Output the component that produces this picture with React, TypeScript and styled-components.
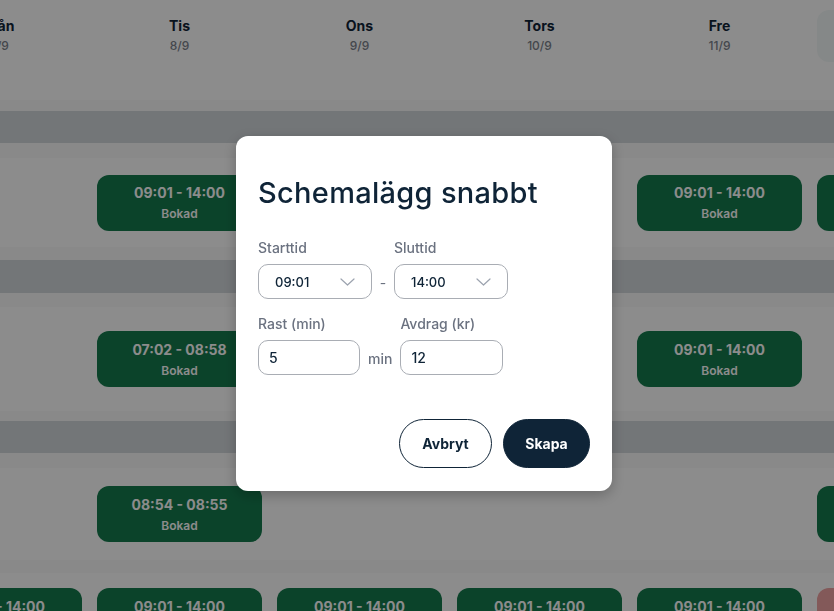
import styled, { createGlobalStyle } from "styled-components";

const navy = "#0f2437";

const GlobalStyle = createGlobalStyle`
  html, body {
    margin: 0;
    padding: 0;
    overflow: hidden;
    background: #ffffff;
    font-family: Inter, "Noto Sans", "DejaVu Sans", sans-serif;
  }
`;

/*******************/
/*    Schedule     */
/*******************/

const Page = styled.div`
  width: 834px;
  height: 611px;
  overflow: hidden;
  background: #ffffff;
`;

// the week grid is scrolled a bit to the right, so Mån is cut off
const Week = styled.div`
  display: flex;
  flex-direction: column;
  width: 1065px;
  margin-left: -83px;
`;

const Columns = styled.div<{ $height: number }>`
  display: grid;
  grid-template-columns: repeat(6, 165px);
  column-gap: 15px;
  align-items: center;
  height: ${(p) => p.$height}px;
  background: #ffffff;
`;

const HeadRow = styled(Columns)`
  align-items: start;
  padding-top: 10px;
  box-sizing: border-box;
`;

const DayHead = styled.div<{ $today?: boolean }>`
  height: 52px;
  border-radius: 12px;
  background: ${(p) => (p.$today ? "#f3f8f8" : "transparent")};
  display: flex;
  flex-direction: column;
  align-items: center;
  justify-content: center;
  gap: 3px;
  padding-bottom: 2px;
  box-sizing: border-box;

  .name {
    font-size: 14px;
    line-height: 18px;
    font-weight: 700;
    color: ${navy};
  }

  .date {
    font-size: 12px;
    line-height: 16px;
    font-weight: 500;
    color: #7c828c;
  }
`;

const Strip = styled.div<{ $height: number }>`
  height: ${(p) => p.$height}px;
  background: #f9f9f9;
`;

const Band = styled.div<{ $height: number }>`
  height: ${(p) => p.$height}px;
  background: #d2d7db;
`;

const Shift = styled.div<{ $tone?: "booked" | "warn" }>`
  height: 56px;
  border-radius: 12px;
  background: ${(p) => (p.$tone === "warn" ? "#eea2a2" : "#157b4e")};
  color: #ffffff;
  display: flex;
  flex-direction: column;
  align-items: center;
  justify-content: center;
  gap: 4px;

  .time {
    font-size: 14px;
    line-height: 18px;
    font-weight: 700;
  }

  .status {
    font-size: 12px;
    line-height: 15px;
    font-weight: 600;
  }
`;

/*******************/
/*      Modal      */
/*******************/

const Overlay = styled.div`
  position: fixed;
  inset: 0;
  background: rgba(0, 0, 0, 0.45);
  display: flex;
  align-items: center;
  justify-content: center;
  padding: 16px 0 0 14px;
`;

const Dialog = styled.div`
  width: 376px;
  box-sizing: border-box;
  padding: 40px 22px 23px;
  background: #ffffff;
  border-radius: 12px;
  box-shadow: 0 4px 14px rgba(0, 0, 0, 0.25);
  display: flex;
  flex-direction: column;
`;

const Title = styled.h2`
  margin: 0 0 28px;
  font-size: 29px;
  line-height: 34px;
  font-weight: 500;
  letter-spacing: 0.3px;
  color: ${navy};
`;

const FieldRow = styled.div<{ $gap: number }>`
  display: flex;
  align-items: flex-end;
  gap: ${(p) => p.$gap}px;
  margin-bottom: 15px;
`;

const Field = styled.label<{ $width: number }>`
  width: ${(p) => p.$width}px;
  display: flex;
  flex-direction: column;
  gap: 6px;
`;

const Label = styled.span`
  font-size: 14px;
  line-height: 20px;
  font-weight: 500;
  color: #6b7280;
`;

const Select = styled.div`
  height: 35px;
  box-sizing: border-box;
  border: 1px solid #a9adb4;
  border-radius: 10px;
  padding: 0 16px 0 16px;
  display: flex;
  align-items: center;
  justify-content: space-between;
  font-size: 13px;
  font-weight: 500;
  color: ${navy};
`;

const Input = styled.input`
  height: 35px;
  box-sizing: border-box;
  border: 1px solid #a9adb4;
  border-radius: 10px;
  padding: 0 10px;
  font-family: inherit;
  font-size: 14px;
  font-weight: 500;
  color: ${navy};
  outline: none;
`;

const Dash = styled.span`
  width: 22px;
  height: 35px;
  line-height: 38px;
  text-align: center;
  font-size: 14px;
  color: #6b7280;
`;

const Unit = styled.span`
  height: 35px;
  line-height: 37px;
  font-size: 14px;
  font-weight: 500;
  color: #6b7280;
`;

const Actions = styled.div`
  display: flex;
  justify-content: flex-end;
  gap: 11px;
  margin-top: 29px;
`;

const Button = styled.button<{ $primary?: boolean; $width: number }>`
  width: ${(p) => p.$width}px;
  height: 49px;
  border-radius: 999px;
  border: 1px solid ${navy};
  background: ${(p) => (p.$primary ? navy : "#ffffff")};
  color: ${(p) => (p.$primary ? "#ffffff" : navy)};
  font-family: inherit;
  font-size: 14px;
  font-weight: 700;
  cursor: pointer;
`;

const Chevron = () => (
  <svg width="15" height="8" viewBox="0 0 15 8" fill="none">
    <path d="M1 1l6.5 6L14 1" stroke="#9ca3af" strokeWidth="1.2" strokeLinecap="round" strokeLinejoin="round" />
  </svg>
);

const days = [
  { name: "Mån", date: "7/9" },
  { name: "Tis", date: "8/9" },
  { name: "Ons", date: "9/9" },
  { name: "Tors", date: "10/9" },
  { name: "Fre", date: "11/9" },
  { name: "Lör", date: "12/9", today: true },
];

type Cell = { time: string; tone?: "booked" | "warn" } | null;

const full = { time: "09:01 - 14:00" };

const rows: { height: number; cells: Cell[] }[] = [
  { height: 89, cells: [null, full, null, null, full, full] },
  { height: 104, cells: [null, { time: "07:02 - 08:58" }, null, null, full, null] },
  { height: 92, cells: [null, { time: "08:54 - 08:55" }, null, null, null, full] },
  { height: 86, cells: [full, full, full, full, full, { time: "09:01 - 14:00", tone: "warn" }] },
];

const ShiftRow = ({ height, cells }: { height: number; cells: Cell[] }) => (
  <Columns $height={height}>
    {cells.map((c, i) =>
      c ? (
        <Shift key={i} $tone={c.tone}>
          <span className="time">{c.time}</span>
          <span className="status">Bokad</span>
        </Shift>
      ) : (
        <div key={i} />
      )
    )}
  </Columns>
);

const App = () => {
  return (
    <Page>
      <GlobalStyle />
      <Week>
        {/* Day headers */}
        <HeadRow $height={100}>
          {days.map((d) => (
            <DayHead key={d.name} $today={d.today}>
              <span className="name">{d.name}</span>
              <span className="date">{d.date}</span>
            </DayHead>
          ))}
        </HeadRow>
        <Strip $height={11} />

        {/* Group 1 */}
        <Band $height={32} />
        <Strip $height={15} />
        <ShiftRow {...rows[0]} />
        <Strip $height={13} />

        {/* Group 2 */}
        <Band $height={33} />
        <Strip $height={14} />
        <ShiftRow {...rows[1]} />
        <Strip $height={10} />

        {/* Group 3 */}
        <Band $height={32} />
        <Strip $height={15} />
        <ShiftRow {...rows[2]} />
        <Strip $height={13} />
        <ShiftRow {...rows[3]} />
      </Week>

      {/* Quick schedule modal */}
      <Overlay>
        <Dialog>
          <Title>Schemalägg snabbt</Title>

          <FieldRow $gap={0}>
            <Field $width={114}>
              <Label>Starttid</Label>
              <Select>
                <span>09:01</span>
                <Chevron />
              </Select>
            </Field>
            <Dash>-</Dash>
            <Field $width={114}>
              <Label>Sluttid</Label>
              <Select>
                <span>14:00</span>
                <Chevron />
              </Select>
            </Field>
          </FieldRow>

          <FieldRow $gap={8}>
            <Field $width={102}>
              <Label>Rast (min)</Label>
              <Input defaultValue="5" />
            </Field>
            <Unit>min</Unit>
            <Field $width={103}>
              <Label>Avdrag (kr)</Label>
              <Input defaultValue="12" />
            </Field>
          </FieldRow>

          <Actions>
            <Button $width={93}>Avbryt</Button>
            <Button $width={87} $primary>
              Skapa
            </Button>
          </Actions>
        </Dialog>
      </Overlay>
    </Page>
  );
};

export default App;
